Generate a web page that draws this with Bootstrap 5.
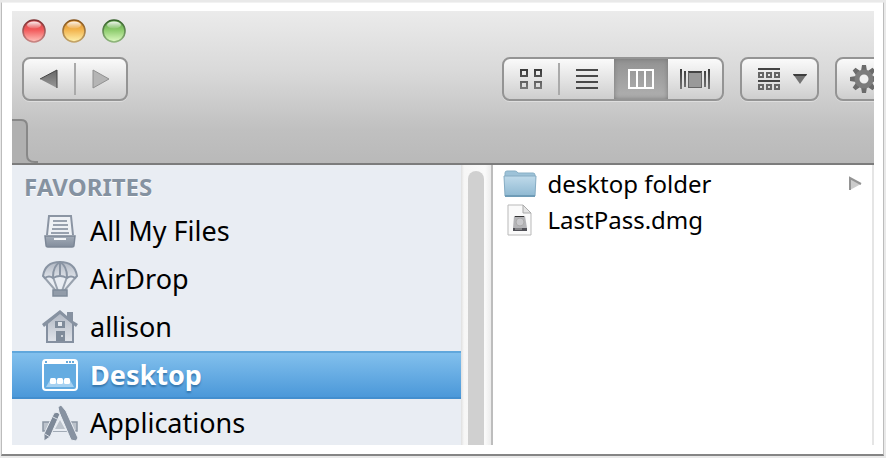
<!DOCTYPE html>
<html lang="en">
<head>
<meta charset="utf-8">
<meta name="viewport" content="width=device-width, initial-scale=1">
<title>Desktop</title>
<link href="https://cdn.jsdelivr.net/npm/bootstrap@5.3.0/dist/css/bootstrap.min.css" rel="stylesheet">
<style>
body{font-family:"Noto Sans","Open Sans",sans-serif;font-size:27px;line-height:36px;color:#000;background:#e9e9e9}
.sheet{margin:2px 2px 2px 1px;padding:8px 9px 9px 10px;background:#fff;border:1px solid #bcbcbc;border-top-color:#f2f2f2;border-bottom:2px solid #858585}
.toolbar{background:linear-gradient(#ebebeb,#d9d9d9 40%,#c0c0c0 78%,#b9b9b9);border-bottom:2px solid #7c7c7c}
.lights{gap:16px;padding:8px 0 0 10px}
.light{width:24px;height:24px;padding:0;border:0;background:none;display:block}
.tools{padding:14px 0 0 10px;margin-right:-40px}
.tool-group{height:44px;border:2px solid #949494;border-radius:8px;background:linear-gradient(#fafafa,#cecece);box-shadow:0 1px 0 #dedede;overflow:hidden;display:flex}
.tool{border:0;padding:0;background:none;display:flex;align-items:center;justify-content:center;position:relative}
.nav-tool{width:50px}
.view-tool{width:54px}
.tool.pressed{background:linear-gradient(#929292,#b0b0b0);box-shadow:inset 0 0 5px #777}
.split{width:2px;height:32px;background:#aaa;align-self:center}
.menu-tool{width:75px;gap:13px;padding-left:6px}
.tabs{height:44px;margin-top:18px}
.tabs svg,.tool svg,.light svg,.entry svg{display:block;flex:none}
.sidebar{flex:52 0 0;background:#e9edf3}
.caption{font-size:24px;line-height:38px;padding:3px 0 0 12px;height:42px;font-weight:700;color:#8592a1;text-shadow:0 1px 0 #fff}
.entry{height:48px;padding:0 0 0 30px;gap:12px;color:#000;text-decoration:none}
.entry.current{background:linear-gradient(#82c0ed,#4b98d9);border-top:2px solid #60a7dc;border-bottom:2px solid #438ece;color:#fff;font-weight:700;text-shadow:0 2px 2px #3476ad}
.scroller{width:32px;padding:6px 7px 0 7px;background:linear-gradient(90deg,#dfdfdf,#f6f6f6 3px,#fafafa 24px,#ececec);border-right:2px solid #bdbdbd}
.thumb{height:100%;background:#d0d0d0;border-radius:8px 8px 0 0}
.column{flex:44 0 0;padding-top:1px;border-right:2px solid #e5e5e5}
.file{height:36px;padding-left:9px;gap:10px;font-size:24px}
.disclosure{margin-right:9px}
</style>
<script src="https://cdn.jsdelivr.net/npm/bootstrap@5.3.0/dist/js/bootstrap.bundle.min.js"></script>
</head>
<body class="vh-100 d-flex overflow-hidden">
<svg width="0" height="0" class="position-absolute" aria-hidden="true">
<defs>
<linearGradient id="dark" x2="0" y2="1"><stop stop-color="#3b3b3b"/><stop offset="1" stop-color="#777"/></linearGradient>
<linearGradient id="mid" x2="0" y2="1"><stop stop-color="#666"/><stop offset="1" stop-color="#999"/></linearGradient>
<linearGradient id="steel" x2="0" y2="1"><stop stop-color="#a3acb8"/><stop offset="1" stop-color="#828d9c"/></linearGradient>
<linearGradient id="pale" x2="0" y2="1"><stop stop-color="#b0b7c2"/><stop offset="1" stop-color="#e0e4ea"/></linearGradient>
<linearGradient id="red" x2="0" y2="1"><stop stop-color="#cf4a4c"/><stop offset=".45" stop-color="#f25a5b"/><stop offset="1" stop-color="#ffc4bd"/></linearGradient>
<linearGradient id="amber" x2="0" y2="1"><stop stop-color="#d98a2b"/><stop offset=".45" stop-color="#f2b44e"/><stop offset="1" stop-color="#fff3b0"/></linearGradient>
<linearGradient id="green" x2="0" y2="1"><stop stop-color="#5d9f48"/><stop offset=".45" stop-color="#8ccb6c"/><stop offset="1" stop-color="#e0fbc4"/></linearGradient>
<linearGradient id="rim-red" x2="0" y2="1"><stop stop-color="#7e2f31"/><stop offset="1" stop-color="#c98583"/></linearGradient>
<linearGradient id="rim-amber" x2="0" y2="1"><stop stop-color="#85531a"/><stop offset="1" stop-color="#c4a468"/></linearGradient>
<linearGradient id="rim-green" x2="0" y2="1"><stop stop-color="#35602a"/><stop offset="1" stop-color="#8fb57c"/></linearGradient>
<linearGradient id="shine" x2="0" y2="1"><stop stop-color="#fff" stop-opacity=".9"/><stop offset="1" stop-color="#fff" stop-opacity=".1"/></linearGradient>
<linearGradient id="folder" x2="0" y2="1"><stop stop-color="#bfdaea"/><stop offset="1" stop-color="#8fb9d2"/></linearGradient>
</defs>
</svg>
<main class="sheet flex-fill d-flex flex-column">
<header class="toolbar overflow-hidden flex-shrink-0">
<div class="lights d-flex">
<button class="light" aria-label="Close"><svg width="24" height="24"><circle cx="12" cy="12" r="11" fill="url(#red)" stroke="url(#rim-red)" stroke-width="1.6"/><ellipse cx="12" cy="6" rx="7" ry="3.5" fill="url(#shine)"/></svg></button>
<button class="light" aria-label="Minimize"><svg width="24" height="24"><circle cx="12" cy="12" r="11" fill="url(#amber)" stroke="url(#rim-amber)" stroke-width="1.6"/><ellipse cx="12" cy="6" rx="7" ry="3.5" fill="url(#shine)"/></svg></button>
<button class="light" aria-label="Zoom"><svg width="24" height="24"><circle cx="12" cy="12" r="11" fill="url(#green)" stroke="url(#rim-green)" stroke-width="1.6"/><ellipse cx="12" cy="6" rx="7" ry="3.5" fill="url(#shine)"/></svg></button>
</div>
<div class="tools d-flex">
<div class="tool-group">
<button class="tool nav-tool" aria-label="Back"><svg width="18" height="20"><path d="M0 10 17 1v18z" fill="url(#mid)"/><path d="M0 10 17 1v18" fill="none" stroke="#444" stroke-width="1"/></svg></button>
<span class="split"></span>
<button class="tool nav-tool" aria-label="Forward"><svg width="18" height="20"><path d="M1 1 17 10 1 19z" fill="#b5b5b5" stroke="#909090"/></svg></button>
</div>
<div class="tool-group ms-auto">
<button class="tool view-tool" aria-label="Icon view"><svg width="22" height="22" fill="none" stroke="url(#dark)" stroke-width="2"><path d="M1 2h6v6H1zM15 2h6v6h-6zM1 14h6v6H1zM15 14h6v6h-6z"/></svg></button>
<span class="split"></span>
<button class="tool view-tool" aria-label="List view"><svg width="22" height="22" fill="#484848"><path d="M0 1h22v2H0zM0 7h22v2H0zM0 13h22v2H0zM0 19h22v2H0z"/></svg></button>
<button class="tool view-tool pressed" aria-label="Column view" aria-pressed="true"><svg width="26" height="22" fill="none" stroke="#fff" stroke-width="2"><path d="M1 2h24v18H1zM9 2v18M17 2v18"/></svg></button>
<button class="tool view-tool" aria-label="Cover flow view"><svg width="30" height="22"><path d="M0 1h2v20H0zM4 3h2v16H4zM24 3h2v16h-2zM28 1h2v20h-2z" fill="url(#dark)"/><path d="M8 3h14v16H8z" fill="#999"/><path d="M8 3h14v2H8z" fill="#444"/><path d="M8 4h1v15h12V4h1v16H8z" fill="#666"/></svg></button>
</div>
<div class="tool-group ms-3">
<button class="tool menu-tool" aria-label="Arrange by"><svg width="22" height="23"><path d="M0 0h22v2H0zM0 12h22v2H0z" fill="#444"/><path d="M1 5h4v4H1zM9 5h4v4H9zM17 5h4v4h-4zM1 17h4v4H1zM9 17h4v4H9zM17 17h4v4h-4z" fill="none" stroke="#666" stroke-width="2"/></svg><svg width="15" height="12"><path d="M0 1h14L7 11z" fill="#737373"/><path d="M0 1h14l-1 2H1z" fill="#3d3d3d"/></svg></button>
</div>
<div class="tool-group ms-3">
<button class="tool menu-tool" aria-label="Action"><svg width="28" height="28" viewBox="-14 -14 28 28"><g fill="#6b6b6b"><path id="tooth" d="M-2-14h4l1 6h-6zM-2 14h4l1-6h-6z"/><use href="#tooth" transform="rotate(45)"/><use href="#tooth" transform="rotate(90)"/><use href="#tooth" transform="rotate(135)"/></g><circle r="7" fill="#f0f0f0" stroke="#7c7c7c" stroke-width="5"/></svg><svg width="15" height="12"><path d="M0 1h14L7 11z" fill="#737373"/></svg></button>
</div>
</div>
<div class="tabs"><svg width="26" height="44"><path d="M0 0h10q5 0 5 6v30q0 8 8 8H0z" fill="#b0b0b0"/><path d="M0 1h9q6 0 6 6v29q0 7 8 7h3" fill="none" stroke="#888" stroke-width="2"/></svg></div>
</header>
<div class="d-flex flex-fill overflow-hidden">
<nav class="sidebar" aria-label="Favorites">
<div class="caption">FAVORITES</div>
<a class="entry d-flex align-items-center" href="#files"><svg width="36" height="36"><path d="M5 22 7 3h22l2 19" fill="#eef1f5" stroke="#8b95a3" stroke-width="2"/><path d="M11 8h14M11 12h15M10 16h16M9 20h18" stroke="#98a1ae" stroke-width="2"/><path d="M3 23h30l-1 9q0 2-2 2H6q-2 0-2-2z" fill="url(#steel)" stroke="#7d8897" stroke-width="1.5"/><path d="M12 25h12v2H12z" fill="#f4f6f8"/></svg>All My Files</a>
<a class="entry d-flex align-items-center" href="#airdrop"><svg width="36" height="36"><path d="M2 16 14 30M34 16 22 30M11 16l5 14M25 16l-5 14" stroke="#99a2ae" stroke-width="2"/><path d="M1 15Q3 1 18 1t17 14l-2 2q-4-3-8 0-7-4-14 0-4-3-8 0z" fill="url(#pale)" stroke="#8994a3" stroke-width="2"/><path d="M11 16Q11 5 18 1q7 4 7 15M18 1v13" fill="none" stroke="#8994a3" stroke-width="2"/><path d="M11 29h14v6H11z" fill="#929ca9" stroke="#7f8a99" stroke-width="1.5"/></svg>AirDrop</a>
<a class="entry d-flex align-items-center" href="#home"><svg width="36" height="36"><path d="M5 14 18 3l13 11v19H5z" fill="url(#pale)" stroke="#8590a0" stroke-width="2"/><path d="m0 15 18-14 7 6V3h6v9l5 3-2 3L18 5 2 18z" fill="#8792a1"/><path d="M13 12h10v7H13zM14 22h9v11h-9z" fill="#7f8b9a"/><path d="M16 13h4v4h-4z" fill="#e4e8ed"/><path d="M19 26h2v2h-2z" fill="#cdd3da"/><path d="M4 32h28v2H4z" fill="#8590a0"/></svg>allison</a>
<a class="entry current d-flex align-items-center" href="#desktop" aria-current="page"><svg width="36" height="36"><rect x="1" y="3" width="34" height="30" rx="3" fill="#65ace1" stroke="#fff" stroke-width="2"/><path d="M2 3h32v4H2z" fill="#fff"/><path d="M3 4h2v2H3zM24 4h2v2h-2zM27 4h2v2h-2zM30 4h2v2h-2z" fill="#68aadb"/><path d="M8 23h20l4 7H4z" fill="#a6d1f1"/><rect x="8" y="21" width="6" height="6" rx="1.5" fill="#fff"/><rect x="15" y="21" width="6" height="6" rx="1.5" fill="#fff"/><rect x="22" y="21" width="6" height="6" rx="1.5" fill="#fff"/></svg>Desktop</a>
<a class="entry d-flex align-items-center" href="#applications"><svg width="36" height="36"><path d="M1 17h34v9H1z" fill="#bcc3cc" stroke="#8a95a3" stroke-width="1.5"/><path d="M18 9 8 26h20z" fill="#e9edf3"/><path d="M18 15l-5 9h10z" fill="#bcc3cc"/><path d="M16 2 19 0l5 6 12 27-2 3-5-1L17 7z" fill="#8792a1" stroke="#eaeef3"/><path d="M12 8q3-2 6 1L8 32l-6 4v-7z" fill="#7e8998" stroke="#eaeef3"/><path d="m11 12 6 3M3 29l5 3" stroke="#dce1e8"/></svg>Applications</a>
</nav>
<div class="scroller flex-shrink-0"><div class="thumb"></div></div>
<section class="column" aria-label="Desktop contents">
<a class="file entry d-flex align-items-center" href="#folder"><svg width="36" height="30"><path d="M3 9V4q0-2 2-2h8q2 0 3 2h15q2 0 2 2v4z" fill="#9dc2d8" stroke="#88afc5"/><path d="M2 7h32l-1 20H3z" fill="url(#folder)" stroke="#86acc3"/><path d="M3 27h30" stroke="#6f9cb7" stroke-width="2"/></svg>desktop folder<svg class="disclosure ms-auto" width="14" height="16"><path d="M1 2v12l11-6z" fill="#ccc"/><path d="M1 14V2l11 6" fill="none" stroke="#949494" stroke-width="2"/></svg></a>
<a class="file entry d-flex align-items-center" href="#image"><svg width="36" height="32"><path d="M6 1h15l8 8v22H6z" fill="#fafafa" stroke="#b9b9b9"/><path d="M21 1v8h8z" fill="#e4e4e4" stroke="#aaa"/><path d="M12 12h11l2 12H11z" fill="#b4b4b7"/><circle cx="18" cy="18" r="4" fill="#c8c8cb" stroke="#aaa"/><path d="M13 12h9v1h-9z" fill="#333"/><path d="M11 24h14v3H11z" fill="#515157"/><path d="M13 25h7" stroke="#b9b9b9"/></svg>LastPass.dmg</a>
</section>
</div>
</main>
</body>
</html>
